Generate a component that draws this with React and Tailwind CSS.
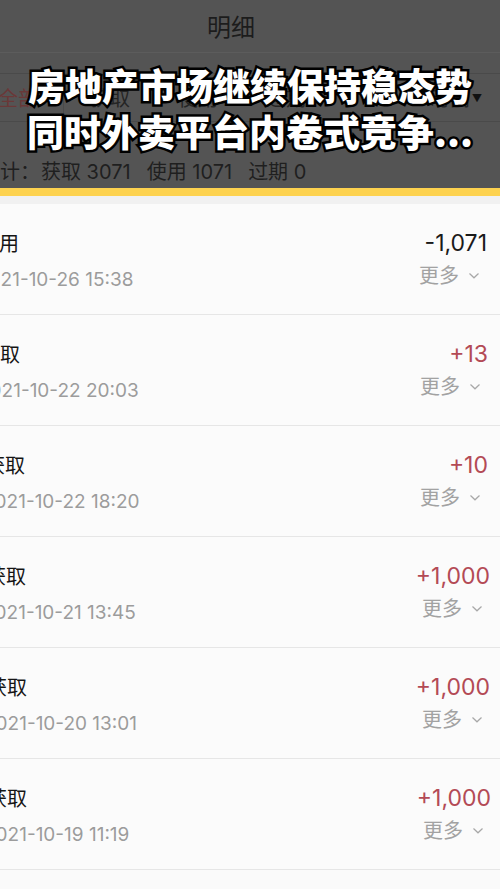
import React from "react";

const rows = [
  { title: "使用", date: "2021-10-26 15:38", amt: "-1,071", pos: false, l: "ml-[-21px]", d: "ml-[-23px]", r: "pr-[13px]" },
  { title: "获取", date: "2021-10-22 20:03", amt: "+13", pos: true, l: "ml-[-20px]", d: "ml-[-22px]", r: "pr-[12px]" },
  { title: "获取", date: "2021-10-22 18:20", amt: "+10", pos: true, l: "ml-[-15px]", d: "ml-[-17px]", r: "pr-[12px]" },
  { title: "获取", date: "2021-10-21 13:45", amt: "+1,000", pos: true, l: "ml-[-14px]", d: "ml-[-17px]", r: "pr-[10px]" },
  { title: "获取", date: "2021-10-20 13:01", amt: "+1,000", pos: true, l: "ml-[-13px]", d: "ml-[-16px]", r: "pr-[10px]" },
  { title: "获取", date: "2021-10-19 11:19", amt: "+1,000", pos: true, l: "ml-[-13px]", d: "ml-[-16px]", r: "pr-[9px]" },
];

function Chevron() {
  return (
    <svg width="12" height="8" viewBox="0 0 12 8" className="ml-[9px] mt-[2px]">
      <path d="M1.5 1.5 L6 5.8 L10.5 1.5" fill="none" stroke="#a8a8a8" strokeWidth="1.2" />
    </svg>
  );
}

export default function App() {
  return (
    <div className="relative w-[500px] h-[889px] overflow-hidden bg-[#fafafa] font-['Noto_Sans','Noto_Sans_CJK_SC',sans-serif]">
      {/* dimmed header */}
      <div className="bg-[#545454] h-[188px] flex flex-col">
        <div className="h-[53px] flex items-center justify-center border-b border-[#5c5c5c]">
          <span className="text-[24px] text-[#1c1c1c] ml-[-38px] font-['Noto_Sans_CJK_SC',sans-serif]">明细</span>
        </div>
        <div className="mt-[20px] h-[49px] border-y border-[#4a4a4a] flex items-center text-[20px] whitespace-nowrap font-['Noto_Sans_CJK_SC',sans-serif]">
          <span className="text-[#6a3838] ml-[-2px] w-[66px] border-r border-[#4a4a4a]">全部</span>
          <span className="text-[#242424] ml-[26px] w-[88px]">获取</span>
          <span className="text-[#242424] w-[88px]">使用</span>
          <span className="text-[#242424] w-[150px]">过期</span>
          <span className="text-[#242424] flex-1 text-right">时间</span>
          <span className="text-[#111] text-[10px] ml-[2px] mr-[18px]">▼</span>
        </div>
        <div className="flex-1 flex items-end pb-[1px]">
          <div className="flex items-baseline ml-[-20px] gap-[16px] text-[20px] text-[#1f1f1f] whitespace-nowrap font-['Inter','Noto_Sans_CJK_SC',sans-serif]">
            <span>合计：</span>
            <span className="ml-[-15px]">获取 3071</span>
            <span>使用 1071</span>
            <span>过期 0</span>
          </div>
        </div>
      </div>
      <div className="h-[8px] bg-[#fdd24f]" />
      <div className="h-[8px] bg-[#f1f1f1]" />

      {/* list */}
      <div className="flex flex-col">
        {rows.map((row, i) => (
          <div key={i} className="h-[111px] border-b border-[#e6e6e6] bg-[#fbfbfb] flex justify-between">
            <div className="flex flex-col pt-[24px] whitespace-nowrap">
              <span className={`${row.l} text-[20px] leading-[30px] text-[#151515] font-['Noto_Sans_CJK_SC',sans-serif]`}>{row.title}</span>
              <span className={`${row.d} text-[19px] leading-[24px] mt-[10px] text-[#9c9c9c] font-['Inter','Noto_Sans_CJK_SC',sans-serif]`}>{row.date}</span>
            </div>
            <div className={`flex flex-col items-end ${row.r} pt-[23px]`}>
              <span className={`text-[23px] leading-[32px] font-['Inter',sans-serif] ${row.pos ? "text-[#b34a55]" : "text-[#1a1a1a]"}`}>{row.amt}</span>
              <div className="flex items-center mt-[3px] mr-[7px]">
                <span className="text-[20px] leading-[26px] text-[#a2a2a2] font-['Noto_Sans_CJK_SC',sans-serif]">更多</span>
                <Chevron />
              </div>
            </div>
          </div>
        ))}
      </div>

      {/* caption overlay */}
      <div className="absolute left-0 right-0 top-[62px] flex flex-col items-center text-[37px] leading-[46px] font-black text-white font-['Noto_Sans_CJK_SC',sans-serif] [-webkit-text-stroke:5px_#000] [paint-order:stroke_fill]">
        <span>房地产市场继续保持稳态势</span>
        <span>同时外卖平台内卷式竞争...</span>
      </div>
    </div>
  );
}
